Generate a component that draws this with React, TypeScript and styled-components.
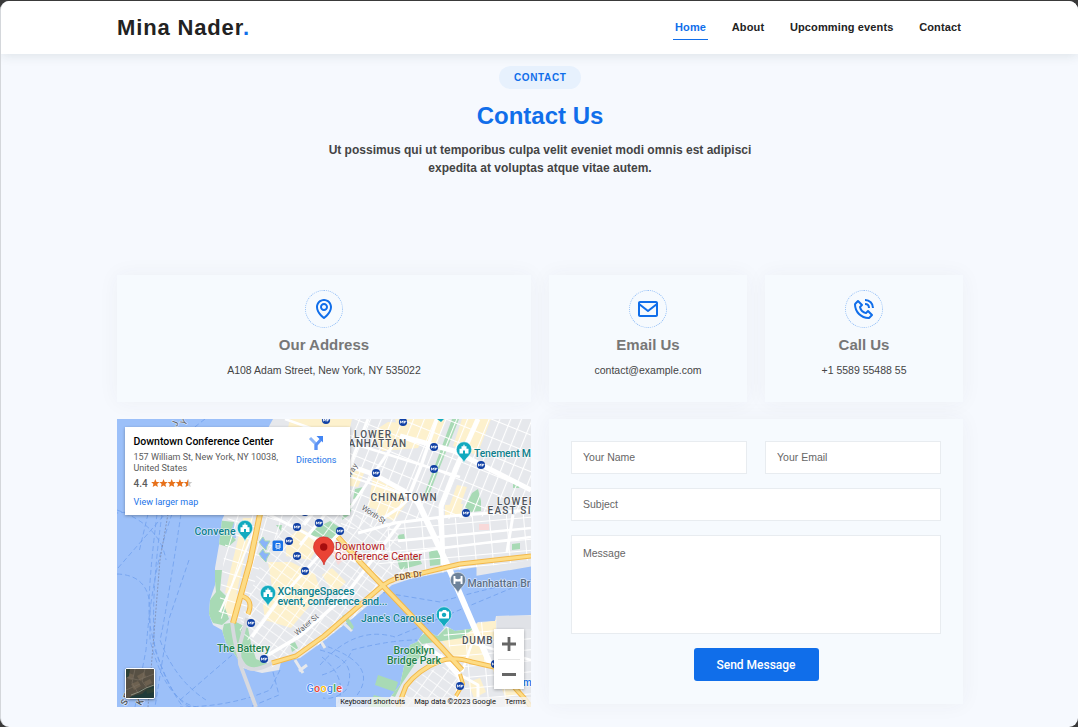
import React from "react";
import styled, { createGlobalStyle } from "styled-components";
import { BiMap, BiEnvelope, BiPhoneCall } from "react-icons/bi";

const GlobalStyle = createGlobalStyle`
  * { box-sizing: border-box; }
  body {
    margin: 0;
    background: #3a3a3a;
    font-family: "Liberation Sans", Arial, sans-serif;
    overflow: hidden;
  }
`;

const Page = styled.div`
  height: 726px;
  margin-top: 1px;
  border-left: 1px solid #d4d7db;
  border-radius: 9px;
  background: #f6f9fe;
  overflow: hidden;
`;

const Header = styled.header`
  position: relative;
  display: flex;
  justify-content: space-between;
  align-items: center;
  height: 53px;
  padding: 0 115px 0 116px;
  background: #fff;
  box-shadow: 0 1px 11px rgba(40, 60, 60, 0.13);
`;

const Logo = styled.h1`
  margin: 0;
  font-size: 22px;
  line-height: 26px;
  letter-spacing: 0.85px;
  color: #222;
  span { color: #106eea; }
`;

const Nav = styled.nav`
  display: flex;
  gap: 21.7px;
`;

const NavLink = styled.a<{ $active?: boolean }>`
  padding: 6px 2px 5px;
  font-size: 11px;
  font-weight: 700;
  line-height: 13px;
  letter-spacing: 0.13px;
  white-space: nowrap;
  color: ${(p) => (p.$active ? "#106eea" : "#222")};
  border-bottom: 1px solid ${(p) => (p.$active ? "#106eea" : "transparent")};
`;

const Intro = styled.section`
  display: flex;
  flex-direction: column;
  align-items: center;
  height: 221px;
  padding: 12px 0 0 1px;
  text-align: center;
`;

const Badge = styled.span`
  height: 23px;
  padding: 0 14.5px 0 15px;
  border-radius: 12px;
  background: #e7f1fd;
  color: #106eea;
  font-size: 10px;
  font-weight: 700;
  line-height: 23px;
  letter-spacing: 0.62px;
`;

const Title = styled.h2`
  margin: 13px 0 0;
  font-size: 24px;
  line-height: 28px;
  color: #106eea;
`;

const Lead = styled.p`
  width: 450px;
  margin: 11px 0 0;
  font-size: 12px;
  font-weight: 700;
  line-height: 18px;
  color: #444;
`;

const Content = styled.main`
  display: grid;
  grid-template-columns: 414px 198px 198px;
  grid-template-rows: 127px 288px;
  gap: 17px 18px;
  padding-left: 116px;
`;

const Card = styled.article`
  display: flex;
  flex-direction: column;
  align-items: center;
  padding-top: 15px;
  background: #f6fafe;
  box-shadow: 0 0 20px rgba(60, 64, 80, 0.05);
`;

const IconRing = styled.div`
  display: flex;
  align-items: center;
  justify-content: center;
  width: 38px;
  height: 38px;
  border: 1px dotted #8fbcf6;
  border-radius: 50%;
  color: #106eea;
  font-size: 24px;
`;

const CardTitle = styled.h3`
  margin: 7px 0 0;
  font-size: 15px;
  line-height: 20px;
  color: #777;
`;

const CardText = styled.p`
  margin: 9px 0 0;
  font-size: 10.5px;
  line-height: 12px;
  color: #444;
`;

const Form = styled.form`
  grid-column: 2 / 4;
  display: grid;
  grid-template-columns: 176px 176px;
  grid-template-rows: 33px 33px 99px 34px;
  column-gap: 18px;
  row-gap: 14px;
  align-self: start;
  height: 285px;
  padding: 22px 22px 0;
  background: #f6fafe;
  box-shadow: 0 0 20px rgba(60, 64, 80, 0.05);
`;

const Input = styled.input<{ $wide?: boolean }>`
  grid-column: ${(p) => (p.$wide ? "1 / 3" : "auto")};
  min-width: 0;
  padding: 0 11px 2px;
  border: 1px solid #e8ecf0;
  border-radius: 0;
  background: #fff;
  outline: none;
  font: 10.5px "Liberation Sans", Arial, sans-serif;
  &::placeholder { color: #666; opacity: 1; }
`;

const Message = styled.textarea`
  grid-column: 1 / 3;
  padding: 11px;
  border: 1px solid #e8ecf0;
  border-radius: 0;
  background: #fff;
  resize: none;
  outline: none;
  font: 10.5px "Liberation Sans", Arial, sans-serif;
  &::placeholder { color: #666; opacity: 1; }
`;

const Submit = styled.button`
  grid-column: 1 / 3;
  justify-self: center;
  width: 125px;
  height: 33px;
  padding: 0;
  border: 0;
  border-radius: 3px;
  background: #106eea;
  color: #fff;
  font: 500 12px Roboto, sans-serif;
`;

const MapFrame = styled.div`
  position: relative;
  width: 414px;
  height: 288px;
  overflow: hidden;
  background: #9cc0f9;
  font-family: Roboto, sans-serif;
`;

const MapCanvas = styled.svg`
  display: block;
`;

const PlaceCard = styled.div`
  position: absolute;
  left: 8px;
  top: 8px;
  display: flex;
  justify-content: space-between;
  width: 225px;
  height: 88px;
  padding: 7.5px 13.5px 0 8.5px;
  background: #fff;
  box-shadow: 0 1px 3px rgba(0, 0, 0, 0.3);
`;

const PlaceInfo = styled.div`
  white-space: nowrap;
`;

const PlaceName = styled.div`
  font-size: 10.5px;
  font-weight: 500;
  line-height: 14px;
  color: #000;
`;

const PlaceAddress = styled.div`
  margin-top: 3px;
  font-size: 9px;
  line-height: 11px;
  color: #5b5b5b;
`;

const Rating = styled.div`
  display: flex;
  align-items: center;
  gap: 3px;
  height: 12px;
  margin-top: 3.5px;
  font-size: 10px;
  font-weight: 500;
  color: #5b5b5b;
`;

const MapLink = styled.a`
  display: block;
  margin-top: 7px;
  font-size: 9px;
  line-height: 12px;
  color: #1a73e8;
`;

const Directions = styled.a`
  display: flex;
  flex-direction: column;
  align-items: center;
  font-size: 9px;
  line-height: 12px;
  color: #1a73e8;
  svg { margin-bottom: 3px; }
`;

const ZoomControl = styled.div`
  position: absolute;
  right: 7px;
  bottom: 18px;
  width: 30px;
  height: 60px;
  background: #fff;
  box-shadow: 0 1px 3px rgba(0, 0, 0, 0.3);
`;

const Satellite = styled.div`
  position: absolute;
  left: 8px;
  bottom: 8px;
  width: 30px;
  height: 31px;
  border: 1.5px solid #fff;
  border-radius: 2px;
  overflow: hidden;
  box-shadow: 0 1px 3px rgba(0, 0, 0, 0.4);
  svg { display: block; }
`;

const Attribution = styled.div`
  position: absolute;
  right: 0;
  bottom: 0;
  display: flex;
  gap: 9px;
  height: 10px;
  padding: 0 5px 0 4px;
  background: rgba(245, 245, 245, 0.75);
  color: #111;
  font-size: 7.5px;
  line-height: 10px;
  white-space: nowrap;
`;

const manhattan =
  "M273 419H531V548L531 562L478 573V567L450 571L410 579L392 585L353 618L345 624L325 640L314 648L300 658L281 662L279 670L262 673L243 668L236 656L226 643L222 630L213 625L209 614L210 600L215 585L215 568L219 545L222 520L245 470Z";
const brooklyn =
  "M531 615L496 616L495 621L478 622L470 629L455 631L446 626L437 636L425 630L417 642L410 645L405 662L400 685L388 700L380 707H531Z";

const subways: [number, number][] = [
  [403, 422], [434, 447], [434, 469], [376, 473], [481, 465], [466, 513],
  [340, 531], [319, 523], [297, 527], [289, 541], [297, 556], [305, 571],
  [251, 623], [264, 659], [460, 686], [495, 664], [326, 420], [305, 512],
];

const greens = [
  "M452 419L459 419L428 497L424 495Z",
  "M216 520l18 2-4 12 6 6-8 7-10-3z",
  "M214 570l8 0-2 20 6 6-2 9 5 14-7 6-9-2-5-9 2-14 6-8z",
  "M224 624l12-2 12 6 3 15 5 16 15 6-20 4-12-6-9-14-9-12z",
  "M312 530l18-9 9 6-4 12-13-2-14-1z",
  "M472 493l6-4 3 12 0 10-10 1-6-5z",
  "M429 552l14-6 2 18-15 2z",
  "M397 559l22-2 3 7-22 6z",
  "M418 639l10-9 10 6 8-8 14 1 8-4 6 3-12 10-20 3-20 3z",
  "M410 642l8-1 8 9-7 8-18 27-6 12-8-3 12-17 5-14z",
  "M355 489l8-2-4 11-6 1z", "M344 505l10-2-5 12-7 5z",
  "M397 535l7-1 1 5-6 1z", "M512 544l8-1v6l-8 1z", "M513 484l7 1-1 3-6 0z",
  "M276 525l6 0-1 6z", "M290 644l5-2 3 6-6 4z",
];

const islandShops = [
  "M290 419l62 0-6 26-60-8z", "M372 432l16-10 40 2-10 24-36 3z", "M395 419h50l-8 25-36-8z",
  "M349 465l17 4-8 18-16-2z", "M373 477l33 18-13 20-25-8z", "M462 419h29l-14 36-24-9z",
  "M383 493l25 8-14 20-18-7z", "M457 485l10 2-8 22-10-2z", "M445 505l18-1-2 10-16 2z",
  "M268 562l23 0 24 12 6 18-30 36-26-8-2-15 10-12z", "M286 540l14-12 22 12-12 20-24-4z",
  "M243 518l10 0-17 78-11-3z", "M322 575l10-7 14 14-12 12z", "M228 592l14 3-5 24-15-6z",
];

const brooklynShops = [
  "M444 635l25-6 14 8 6 26-34-5-14-18z", "M476 624l20-4v20l-16-4z",
  "M490 664l28 2 4 26-16 6z", "M468 682l12-4 6 14-12 6z",
];

const whiteRoads: [string, number][] = [
  ["M437 419L421 466L408 498", 3.5], ["M478 419L456 468L441 506L443 565", 5],
  ["M400 436L454 451L531 490", 5], ["M350 466L373 474L404 491L418 503", 5],
  ["M416 498L448 566L490 664", 6], ["M531 510L450 516L395 523L358 533", 3],
  ["M380 520L399 508L410 498", 3], ["M304 525L350 465L368 419", 3],
  ["M350 508L396 441", 3], ["M300 545L328 511L350 475", 3],
  ["M531 528L398 541", 2.5], ["M268 655L300 636L345 596L400 523", 3.5],
  ["M390 556L444 548L531 537", 2.5], ["M339 533L279 600L252 637", 3],
  ["M268 514L309 535L356 562", 3], ["M254 530L232 585L220 612", 2],
  ["M513 515L507 552", 3], ["M285 419L361 446L460 477", 2.5],
  ["M440 655L460 678L455 707", 4], ["M453 671L478 685V707", 3],
  ["M462 672L472 643L531 660", 2.5], ["M425 645L461 672", 4],
  ["M330 470L420 500", 2],
];

const yellowRoads: [string, number][] = [
  ["M260 514L250 562L233 623", 5],
  ["M272 663L296 656L324 636L382 586Q395 576 418 574L460 564L531 556", 4.2],
  ["M338 537L360 562L384 587L442 648L462 670", 4.6],
  ["M398 707L406 686Q418 670 440 661Q453 656 472 662L494 667", 4],
  ["M242 596Q254 600 248 614", 4],
  ["M460 674L463 684L456 696", 3],
  ["M506 678L525 699L531 707", 4],
];

const ferries = [
  "M157 514Q145 610 151 630Q165 695 190 707", "M172 514Q152 570 146 650L135 707",
  "M181 514Q165 620 160 640Q175 680 206 700", "M162 514Q150 600 155 650Q170 690 183 707",
  "M117 574Q150 575 150 610V640Q165 700 196 707", "M117 510Q160 525 166 560",
  "M150 510L117 513M118 568L165 514", "M232 655L180 700M280 670L270 690Q230 707 180 707",
  "M320 665Q355 625 395 637L531 580", "M320 650Q360 660 346 690Q335 700 323 698",
  "M320 644Q385 665 353 700", "M322 675Q345 668 352 650Q390 640 417 640",
  "M322 657Q350 680 336 707", "M380 592L440 602Q488 588 531 580", "M273 672L279 695L250 707",
  "M205 419L191 430M148 514L139 552", "M189 560L169 619L155 707",
];

function Pin({ x, y, color, kind }: { x: number; y: number; color: string; kind: "house" | "camera" | "bridge" }) {
  return (
    <g transform={`translate(${x} ${y})`}>
      <path d="M0 13.5C-.8 8.5-7.7 6-7.7 0A7.7 7.7 0 0 1 7.7 0C7.7 6 .8 8.5 0 13.5Z" fill={color} stroke="#fff" strokeWidth=".5" />
      {kind === "house" && <path fillRule="evenodd" d="M-.6-4.8H.6V-3.3H2.5V-.8H4.5V4H-4.5V-.8H-2.5V-3.3H-.6ZM-1 1V4H1V1Z" fill="#fff" />}
      {kind === "camera" && <path fillRule="evenodd" d="M-5-3H-2L-1-4.5H2L3-3H5V4H-5ZM0-1.8A2.2 2.2 0 1 0 .1-1.8Z" fill="#fff" />}
      {kind === "bridge" && <path d="M-4.5-4H-2.6V-1.6Q0 0 2.6-1.6V-4H4.5V4H2.6V1.5H-2.6V4H-4.5Z" fill="#fff" />}
    </g>
  );
}

interface LabelProps {
  x: number;
  y: number;
  width: number;
  size?: number;
  color?: string;
  rotate?: number;
  weight?: number;
  children: string;
}

function Label({ x, y, width, size = 10.5, color = "#0d7f8c", rotate = 0, weight = 500, children }: LabelProps) {
  return (
    <text
      x={x} y={y} textLength={width} fontSize={size} fill={color} fontWeight={weight}
      stroke="#fff" strokeWidth="1.4" strokeOpacity=".6" paintOrder="stroke" strokeLinejoin="round"
      transform={rotate ? `rotate(${rotate} ${x} ${y})` : undefined}
    >
      {children}
    </text>
  );
}

function CityMap() {
  return (
    <MapCanvas width="414" height="288" viewBox="117 419 414 288">
      <defs>
        <pattern id="gridNorth" width="10" height="17" patternUnits="userSpaceOnUse" patternTransform="rotate(22)">
          <path d="M0 0H10M0 0V17" stroke="#fff" strokeWidth="2.2" fill="none" />
        </pattern>
        <pattern id="gridEast" width="17" height="11" patternUnits="userSpaceOnUse" patternTransform="rotate(-5)">
          <path d="M0 0H17M0 0V11" stroke="#fff" strokeWidth="2" fill="none" />
        </pattern>
        <pattern id="gridSouth" width="12" height="9" patternUnits="userSpaceOnUse" patternTransform="rotate(36)">
          <path d="M0 0H12M0 0V9" stroke="#fff" strokeWidth="1.7" fill="none" />
        </pattern>
        <pattern id="gridWest" width="14" height="13" patternUnits="userSpaceOnUse" patternTransform="rotate(17)">
          <path d="M0 0H14M0 0V13" stroke="#fff" strokeWidth="1.8" fill="none" />
        </pattern>
        <clipPath id="island"><path d={manhattan} /></clipPath>
        <clipPath id="shore"><path d={brooklyn} /></clipPath>
      </defs>

      <rect x="117" y="419" width="414" height="288" fill="#9cc0f9" />
      <g stroke="#709fee" strokeWidth=".8" strokeDasharray="5 3" fill="none">
        {ferries.map((d) => <path key={d} d={d} />)}
      </g>
      <path d="M168 514L160 560L148 707" stroke="#7c8cae" strokeWidth=".8" strokeDasharray="2 1.5" fill="none" />

      <path d={manhattan} fill="#e6e8ec" />
      <path d={brooklyn} fill="#e6e8ec" />
      <path d="M295 660L303 673M299 671L307 665M320 640L325 648M340 620L352 631M478 574L531 565V555H478Z" stroke="#e6e8ec" strokeWidth="3" fill="#e6e8ec" />
      <path d="M223 524l11-2 2 16-13 3z" fill="#9cc0f9" opacity=".8" />
      <g clipPath="url(#island)">
        {islandShops.map((d) => <path key={d} d={d} fill="#fdf1cd" />)}
        {greens.map((d) => <path key={d} d={d} fill="#a8dab5" />)}
        <path d="M330 550l12-5 6 10-10 10zM479 524h10v6h-10z" fill="#f8d9d9" />
        <path d="M273 419H531V513L395 523L340 531L350 465V419Z" fill="url(#gridNorth)" />
        <path d="M395 523L531 511V560L410 578L360 555Z" fill="url(#gridEast)" />
        <path d="M290 515H395L405 570L330 640L270 668L238 628L262 560Z" fill="url(#gridSouth)" />
        <path d="M228 515H290L262 560L242 622L218 618Z" fill="url(#gridWest)" />
      </g>
      <g clipPath="url(#shore)">
        {brooklynShops.map((d) => <path key={d} d={d} fill="#fdf1cd" />)}
        {greens.map((d) => <path key={d} d={d} fill="#a8dab5" />)}
        <path d="M440 628L531 615V707H468L462 672Z" fill="url(#gridEast)" />
        <path d="M406 690L425 672L450 665L460 680V707H402Z" fill="url(#gridSouth)" />
        <path d="M497 616H531V629H497Z" fill="#e0e2e7" />
      </g>
      <path d="M378 675l20 7-3 10-20-7zM374 695l18 5-2 7h-22zM342 616l4-2 8 13-2 3z" fill="#a8dab5" />
      <path d="M259 542l4-5 2 4 5 0-3 5-1 4-4-4zM259 554l4-5 2 4 5 0-3 5-1 4-4-4z" fill="#8ab4f8" stroke="#a8dab5" />

      <g fill="none" stroke="#fff" strokeLinejoin="round">
        {whiteRoads.map(([d, w]) => <path key={d} d={d} strokeWidth={w} />)}
      </g>
      <path d="M232 622Q236 656 244 665T272 663M247 618L239 648L240 664L256 707" stroke="#d7d9df" strokeWidth="3.8" fill="none" />
      <g fill="none" stroke="#f3b84a" strokeLinejoin="round">
        {yellowRoads.map(([d, w]) => <path key={d} d={d} strokeWidth={w + 1} />)}
      </g>
      <g fill="none" stroke="#fddc86" strokeLinejoin="round">
        {yellowRoads.map(([d, w]) => <path key={d} d={d} strokeWidth={w - 1} />)}
      </g>

      {subways.map(([x, y]) => (
        <g key={`${x}-${y}`} transform={`translate(${x} ${y})`}>
          <circle r="4.1" fill="#1040a5" />
          <path d="M-2.6 1.4V-1.2L-1.3.5L0-1.2V1.4M1.4-1.2V1.4M1.4 0H2.8V-1.2" stroke="#fff" strokeWidth=".9" fill="none" />
        </g>
      ))}
      <rect x="272.5" y="540.500" width="10.500" height="10.500" rx="1.5" fill="#1a73e8" />
      <path d="M276 543.5h4v4.5h-4zM276 546h4M276.5 549.3l1-1M279.5 549.3l-1-1" stroke="#fff" strokeWidth=".9" fill="none" />

      <Pin x={245} y={528} color="#12aabf" kind="house" />
      <Pin x={268} y={593} color="#12aabf" kind="house" />
      <Pin x={464} y={449.5} color="#12aabf" kind="house" />
      <Pin x={444} y={614.5} color="#12aabf" kind="camera" />
      <Pin x={458} y={580} color="#6d8299" kind="bridge" />
      <path d="M437 419h7l-3 3z" fill="#12aabf" />
      <path d="M324 565C322 557 313.5 555 313.5 547A10 10 0 0 1 334 547C334 555 325.5 557 324 565Z" fill="#ea4335" stroke="#c5221f" strokeWidth=".6" />
      <circle cx="323.7" cy="547" r="3.7" fill="#a50e0e" />

      <Label x={354} y={437.5} width={37} size={10} color="#50555b">LOWER</Label>
      <Label x={339} y={447} width={67} size={10} color="#50555b">MANHATTAN</Label>
      <Label x={370.5} y={501} width={66} size={10} color="#50555b">CHINATOWN</Label>
      <Label x={497} y={504.5} width={38} size={10} color="#50555b">LOWER</Label>
      <Label x={487.5} y={514} width={43} size={10} color="#50555b">EAST SI</Label>
      <Label x={462} y={644} width={30.5} size={10} color="#50555b">DUMB</Label>
      <Label x={474} y={456.5} width={57}>Tenement M</Label>
      <Label x={194.5} y={535} width={41}>Convene</Label>
      <Label x={277.5} y={595} width={77} size={10.8}>XChangeSpaces</Label>
      <Label x={277.5} y={605} width={110} size={10.8}>event, conference and...</Label>
      <Label x={361} y={622} width={73.5}>Jane's Carousel</Label>
      <Label x={335} y={549.5} width={50} color="#b3191b" weight={400}>Downtown</Label>
      <Label x={335} y={559.5} width={87} color="#b3191b" weight={400}>Conference Center</Label>
      <Label x={467.5} y={587} width={63} color="#5c6f86">Manhattan Br</Label>
      <Label x={217} y={651.5} width={53} color="#21804a">The Battery</Label>
      <Label x={393.5} y={654} width={41} color="#21804a">Brooklyn</Label>
      <Label x={387} y={664} width={54} color="#21804a">Bridge Park</Label>
      <Label x={361} y={509} width={27} size={7.8} rotate={34} color="#5c6065" weight={400}>Worth St</Label>
      <Label x={297} y={636} width={29} size={7.8} rotate={-40} color="#5c6065" weight={400}>Water St</Label>
      <Label x={395} y={581} width={28} size={8.8} rotate={-10} color="#7b4f27">FDR Dr</Label>
      <Label x={350} y={478} width={15} size={7.8} rotate={-58} color="#5c6065" weight={400}>way</Label>
      <Label x={177} y={427} width={14} size={9} rotate={-70} color="#5c6065" weight={400}>JE</Label>
      <Label x={185} y={426} width={14} size={9} rotate={-55} color="#5c6065" weight={400}>YO</Label>
      <Label x={126} y={706} width={12} size={9} rotate={-66} color="#50555b">SE</Label>
      <Label x={141} y={706} width={8} size={9} rotate={-60} color="#50555b">K</Label>
      <Label x={523} y={686} width={8} size={10} color="#1a73e8">m</Label>

      <text x="306.5" y="691.5" fontSize="10.8" fontWeight="500" textLength="35.5" fill="#4285f4" stroke="#fff" strokeWidth="1.2" paintOrder="stroke">
        G<tspan fill="#ea4335">o</tspan><tspan fill="#fbbc04">o</tspan>g<tspan fill="#34a853">l</tspan><tspan fill="#ea4335">e</tspan>
      </text>
    </MapCanvas>
  );
}

function Star({ x, half }: { x: number; half?: boolean }) {
  const d = "M4 0L5.2 2.9L8.2 3.1L5.9 5.1L6.6 8L4 6.4L1.4 8L2.1 5.1L-.2 3.1L2.8 2.9Z";
  return (
    <g transform={`translate(${x} 0)`}>
      <path d={d} fill={half ? "#c9c9c9" : "#e7711b"} />
      {half && <path d="M4 0V6.4L1.4 8L2.1 5.1L-.2 3.1L2.8 2.9Z" fill="#e7711b" />}
    </g>
  );
}

function MapPanel() {
  return (
    <MapFrame>
      <CityMap />
      <PlaceCard>
        <PlaceInfo>
          <PlaceName>Downtown Conference Center</PlaceName>
          <PlaceAddress>157 William St, New York, NY 10038,<br />United States</PlaceAddress>
          <Rating>
            4.4
            <svg width="42" height="9" viewBox="-.3 0 42 9">
              {[0, 8.2, 16.4, 24.6].map((x) => <Star key={x} x={x} />)}
              <Star x={32.8} half />
            </svg>
          </Rating>
          <MapLink>View larger map</MapLink>
        </PlaceInfo>
        <Directions>
          <svg width="16" height="16" viewBox="0 0 16 16" fill="none">
            <path d="M2 3L8 9V15" stroke="#8ab4f8" strokeWidth="3" />
            <path d="M8 15V10L13 4.5" stroke="#5b92f5" strokeWidth="3" />
            <path d="M8.5 1H15V7.5Z" fill="#4285f4" />
          </svg>
          Directions
        </Directions>
      </PlaceCard>
      <Satellite>
        <svg width="28" height="29" viewBox="0 0 28 29">
          <rect width="28" height="29" fill="#3b4038" />
          <path d="M0 0H28V15L14 21L5 29H0Z" fill="#575044" />
          <path d="M3 4l5 2-2 5-4-1zM11 7l7-4 2 5-6 4zM5 15l7-3 3 5-7 4zM18 13l6-3 2 4-6 3z" fill="#6d6150" />
          <path d="M0 8l12 3L28 5M9 0L6 14 12 24M19 0L16 12 21 19M0 21L14 15" stroke="#786f62" strokeWidth=".7" fill="none" />
          <path d="M28 17L21 20L16 25L6 27L3 29H28Z" fill="#203b3a" />
          <path d="M28 16L20 19L13 23L5 26" stroke="#8a8e7e" strokeWidth="1" fill="none" />
          <path d="M0 0H4L3 7L0 9ZM20 20l8-1v4l-7 2z" fill="#2e4136" />
        </svg>
      </Satellite>
      <ZoomControl>
        <svg width="30" height="60" viewBox="0 0 30 60" fill="none">
          <path d="M8 15H22M15 8V22M8 45.5H22" stroke="#666" strokeWidth="2.8" />
          <path d="M4 30.5H26" stroke="#e6e6e6" />
        </svg>
      </ZoomControl>
      <Attribution>
        <span>Keyboard shortcuts</span>
        <span>Map data ©2023 Google</span>
        <span>Terms</span>
      </Attribution>
    </MapFrame>
  );
}

const contacts = [
  { title: "Our Address", text: "A108 Adam Street, New York, NY 535022", Icon: BiMap },
  { title: "Email Us", text: "contact@example.com", Icon: BiEnvelope },
  { title: "Call Us", text: "+1 5589 55488 55", Icon: BiPhoneCall },
];

export default function App() {
  return (
    <>
      <GlobalStyle />
      <Page>
        <Header>
          <Logo>Mina Nader<span>.</span></Logo>
          <Nav>
            <NavLink $active>Home</NavLink>
            <NavLink>About</NavLink>
            <NavLink>Upcomming events</NavLink>
            <NavLink>Contact</NavLink>
          </Nav>
        </Header>
        <Intro>
          <Badge>CONTACT</Badge>
          <Title>Contact Us</Title>
          <Lead>Ut possimus qui ut temporibus culpa velit eveniet modi omnis est adipisci expedita at voluptas atque vitae autem.</Lead>
        </Intro>
        <Content>
          {contacts.map(({ title, text, Icon }) => (
            <Card key={title}>
              <IconRing><Icon /></IconRing>
              <CardTitle>{title}</CardTitle>
              <CardText>{text}</CardText>
            </Card>
          ))}
          <MapPanel />
          <Form>
            <Input placeholder="Your Name" />
            <Input placeholder="Your Email" />
            <Input $wide placeholder="Subject" />
            <Message placeholder="Message" />
            <Submit type="button">Send Message</Submit>
          </Form>
        </Content>
      </Page>
    </>
  );
}
